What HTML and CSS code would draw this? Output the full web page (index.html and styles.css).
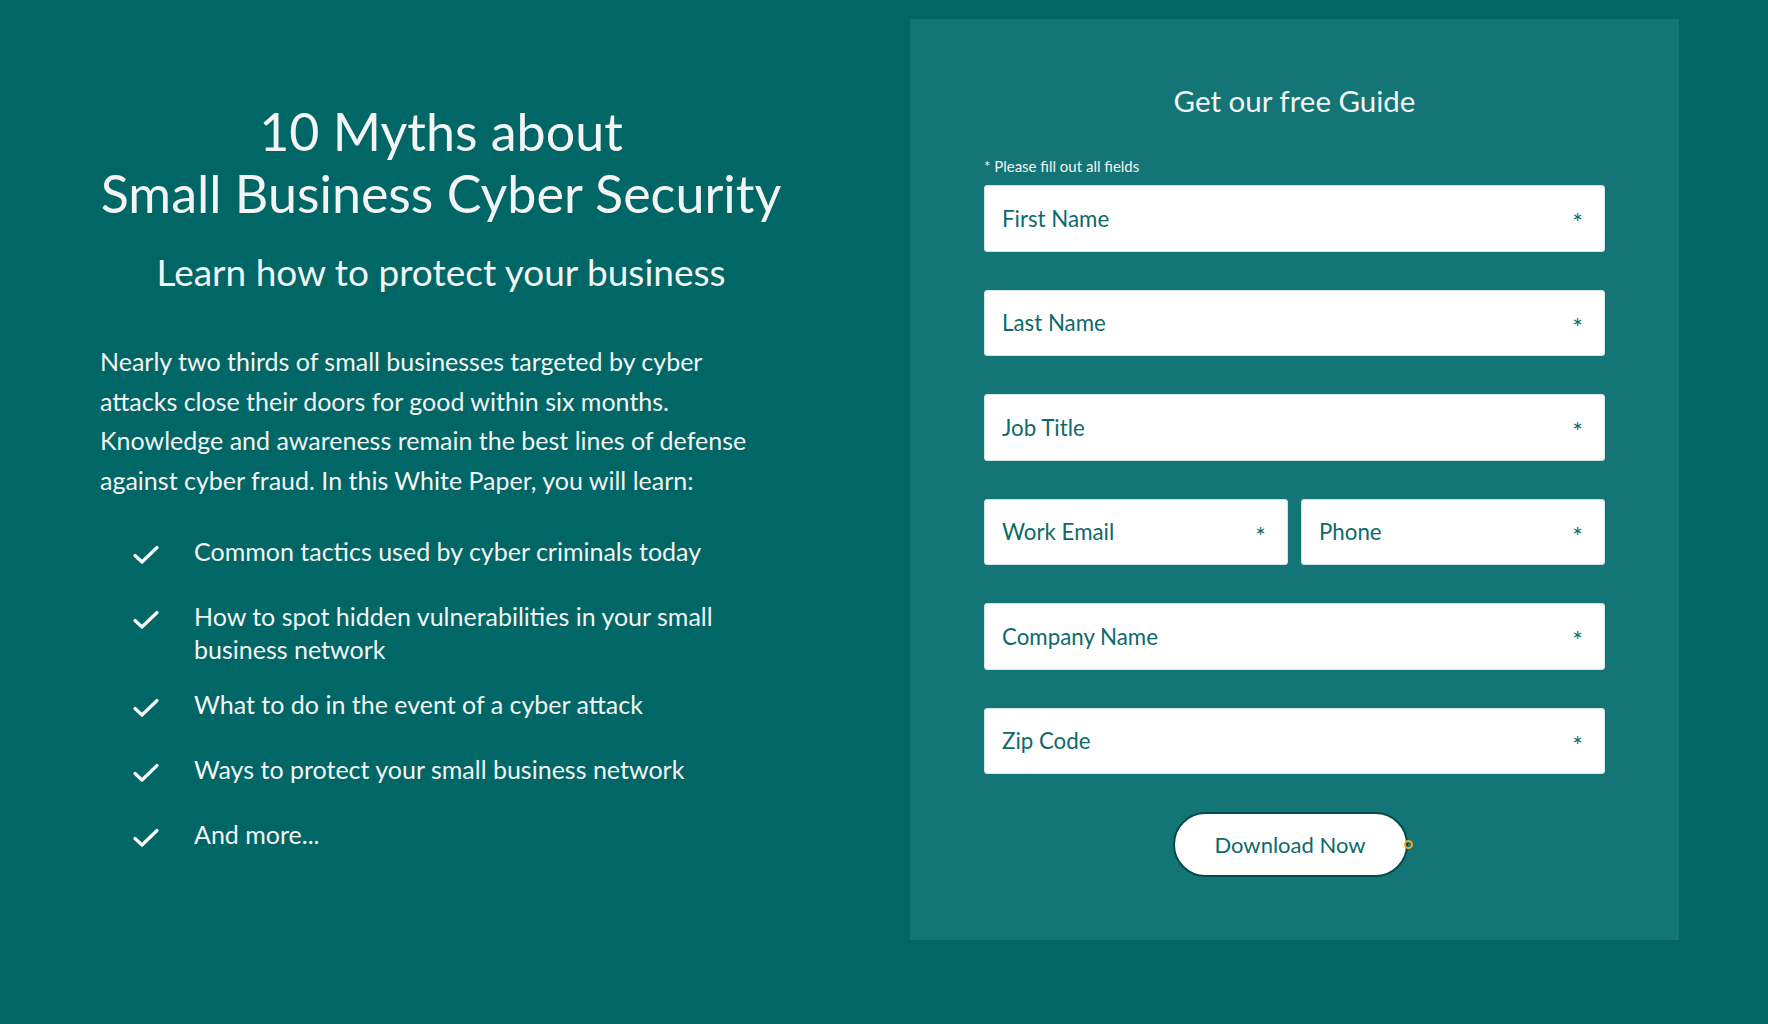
FILE: index.html
```html
<!DOCTYPE html>
<html lang="en">
<head>
<meta charset="utf-8">
<title>10 Myths about Small Business Cyber Security</title>
<link rel="stylesheet" href="styles.css">
</head>
<body>
<main class="page">
  <section class="intro">
    <h1 class="title">10 Myths about<br>Small Business Cyber Security</h1>
    <h2 class="subtitle">Learn how to protect your business</h2>
    <p class="lead">Nearly two thirds of small businesses targeted by cyber attacks close their doors for good within six months. Knowledge and awareness remain the best lines of defense against cyber fraud. In this White Paper, you will learn:</p>
    <ul class="points">
      <li><svg class="check" viewBox="0 0 26 20"><polyline points="2,10.5 9,17 24,2.5"/></svg><span>Common tactics used by cyber criminals today</span></li>
      <li><svg class="check" viewBox="0 0 26 20"><polyline points="2,10.5 9,17 24,2.5"/></svg><span>How to spot hidden vulnerabilities in your small business network</span></li>
      <li><svg class="check" viewBox="0 0 26 20"><polyline points="2,10.5 9,17 24,2.5"/></svg><span>What to do in the event of a cyber attack</span></li>
      <li><svg class="check" viewBox="0 0 26 20"><polyline points="2,10.5 9,17 24,2.5"/></svg><span>Ways to protect your small business network</span></li>
      <li><svg class="check" viewBox="0 0 26 20"><polyline points="2,10.5 9,17 24,2.5"/></svg><span>And more...</span></li>
    </ul>
  </section>
  <section class="panel">
    <h2 class="panel-title">Get our free Guide</h2>
    <p class="note">* Please fill out all fields</p>
    <form class="form">
      <div class="field"><span>First Name</span><span class="req">*</span></div>
      <div class="field"><span>Last Name</span><span class="req">*</span></div>
      <div class="field"><span>Job Title</span><span class="req">*</span></div>
      <div class="pair">
        <div class="field"><span>Work Email</span><span class="req">*</span></div>
        <div class="field"><span>Phone</span><span class="req">*</span></div>
      </div>
      <div class="field"><span>Company Name</span><span class="req">*</span></div>
      <div class="field"><span>Zip Code</span><span class="req">*</span></div>
      <div class="actions">
        <button type="button" class="btn">Download Now<span class="dot"></span></button>
      </div>
    </form>
  </section>
</main>
</body>
</html>
```

FILE: styles.css
```css
* { box-sizing: border-box; }
html, body { margin: 0; padding: 0; }
body {
  background: #006666;
  font-family: Lato, "Open Sans", "Liberation Sans", sans-serif;
  color: #f4f4f4;
  width: 1768px;
  height: 1024px;
  overflow: hidden;
}
.page {
  display: flex;
  align-items: flex-start;
  padding: 19px 89px 0 100px;
  gap: 128px;
}
.intro {
  width: 682px;
  flex: none;
  padding-top: 81px;
}
.title {
  margin: 0;
  text-align: center;
  font-weight: 400;
  font-size: 52px;
  line-height: 62px;
  white-space: nowrap;
}
.subtitle {
  margin: 26px 0 0;
  text-align: center;
  font-weight: 400;
  font-size: 37px;
  line-height: 44px;
}
.lead {
  margin: 48px 0 0;
  font-size: 25px;
  line-height: 39.5px;
  max-width: 660px;
}
.points {
  list-style: none;
  margin: 35px 0 0;
  padding: 0 0 0 33px;
}
.points li {
  display: flex;
  align-items: flex-start;
  min-height: 43px;
  margin-bottom: 22px;
  font-size: 25px;
  line-height: 33px;
}
.check {
  flex: none;
  width: 26px;
  height: 20px;
  margin-top: 10px;
  margin-right: 35px;
  fill: none;
  stroke: #ffffff;
  stroke-width: 3.2;
  stroke-linecap: round;
  stroke-linejoin: round;
}
.points li span { max-width: 560px; }
.panel {
  width: 769px;
  height: 921px;
  flex: none;
  background: #137575;
  padding: 62px 74px 0;
}
.panel-title {
  margin: 0;
  text-align: center;
  font-weight: 400;
  font-size: 29.5px;
  line-height: 40px;
}
.note {
  margin: 36px 0 0;
  font-size: 15px;
  line-height: 18px;
}
.form {
  margin-top: 10px;
  display: flex;
  flex-direction: column;
  gap: 38px;
}
.field {
  height: 66.5px;
  background: #ffffff;
  border: 1px solid #d6e4e4;
  border-radius: 3px;
  display: flex;
  align-items: center;
  justify-content: space-between;
  padding: 0 21px 0 17px;
  color: #0d6a6a;
  font-size: 22.3px;
}
.req {
  font-size: 25px;
  position: relative;
  top: 4px;
}
.pair {
  display: grid;
  grid-template-columns: 1fr 1fr;
  gap: 13px;
}
.actions {
  display: flex;
  justify-content: center;
  margin-top: 0;
}
.btn {
  position: relative;
  width: 235px;
  height: 65px;
  border-radius: 33px;
  border: 2px solid #034b4b;
  background: #ffffff;
  color: #0d6a6a;
  font-family: Lato, "Open Sans", "Liberation Sans", sans-serif;
  font-size: 22px;
  padding: 0;
  margin-left: -9px;
}
.dot {
  position: absolute;
  right: -7px;
  top: 26px;
  width: 9px;
  height: 9px;
  border: 2px solid #f4a521;
  border-radius: 50%;
}
```
